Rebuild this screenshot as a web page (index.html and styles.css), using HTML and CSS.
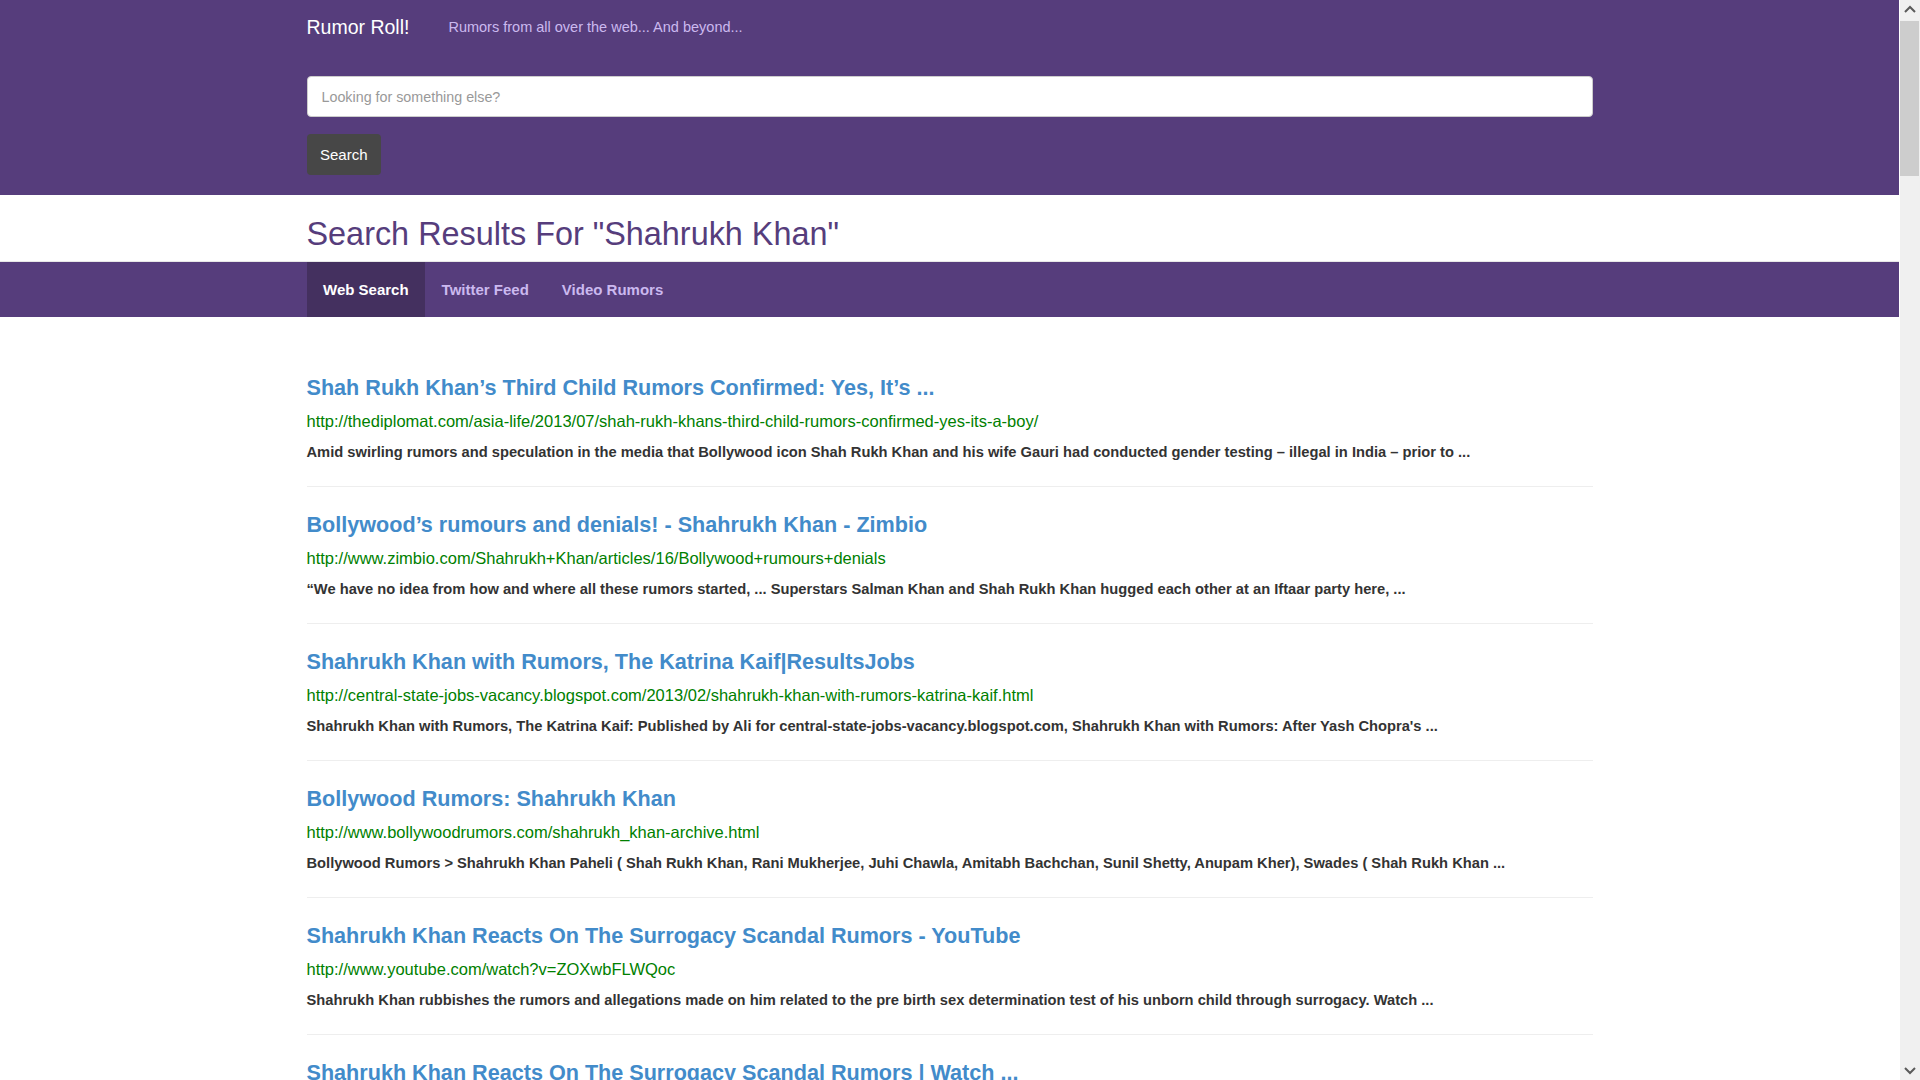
FILE: index.html
```html
<!DOCTYPE html>
<html lang="en">
<head>
<meta charset="utf-8">
<title>Rumor Roll! - Search Results</title>
<link rel="stylesheet" href="styles.css">
</head>
<body>
<header class="masthead">
  <div class="container">
    <div class="brand-row">
      <a class="brand" href="#">Rumor Roll!</a>
      <span class="tagline">Rumors from all over the web... And beyond...</span>
    </div>
    <form class="search-form">
      <input class="search-input" type="text" placeholder="Looking for something else?">
      <button class="search-btn" type="button">Search</button>
    </form>
  </div>
</header>

<div class="container">
  <h1 class="page-title">Search Results For "Shahrukh Khan"</h1>
</div>

<nav class="tabbar">
  <div class="container tabs">
    <a class="tab active" href="#">Web Search</a>
    <a class="tab" href="#">Twitter Feed</a>
    <a class="tab" href="#">Video Rumors</a>
  </div>
</nav>

<main class="container results">
  <div class="result">
    <a class="result-title" href="#">Shah Rukh Khan’s Third Child Rumors Confirmed: Yes, It’s ...</a>
    <div class="result-url">http://thediplomat.com/asia-life/2013/07/shah-rukh-khans-third-child-rumors-confirmed-yes-its-a-boy/</div>
    <p class="result-snippet">Amid swirling rumors and speculation in the media that Bollywood icon Shah Rukh Khan and his wife Gauri had conducted gender testing – illegal in India – prior to ...</p>
  </div>
  <div class="result">
    <a class="result-title" href="#">Bollywood’s rumours and denials! - Shahrukh Khan - Zimbio</a>
    <div class="result-url">http://www.zimbio.com/Shahrukh+Khan/articles/16/Bollywood+rumours+denials</div>
    <p class="result-snippet">“We have no idea from how and where all these rumors started, ... Superstars Salman Khan and Shah Rukh Khan hugged each other at an Iftaar party here, ...</p>
  </div>
  <div class="result">
    <a class="result-title" href="#">Shahrukh Khan with Rumors, The Katrina Kaif|ResultsJobs</a>
    <div class="result-url">http://central-state-jobs-vacancy.blogspot.com/2013/02/shahrukh-khan-with-rumors-katrina-kaif.html</div>
    <p class="result-snippet">Shahrukh Khan with Rumors, The Katrina Kaif: Published by Ali for central-state-jobs-vacancy.blogspot.com, Shahrukh Khan with Rumors: After Yash Chopra's ...</p>
  </div>
  <div class="result">
    <a class="result-title" href="#">Bollywood Rumors: Shahrukh Khan</a>
    <div class="result-url">http://www.bollywoodrumors.com/shahrukh_khan-archive.html</div>
    <p class="result-snippet">Bollywood Rumors &gt; Shahrukh Khan Paheli ( Shah Rukh Khan, Rani Mukherjee, Juhi Chawla, Amitabh Bachchan, Sunil Shetty, Anupam Kher), Swades ( Shah Rukh Khan ...</p>
  </div>
  <div class="result">
    <a class="result-title" href="#">Shahrukh Khan Reacts On The Surrogacy Scandal Rumors - YouTube</a>
    <div class="result-url">http://www.youtube.com/watch?v=ZOXwbFLWQoc</div>
    <p class="result-snippet">Shahrukh Khan rubbishes the rumors and allegations made on him related to the pre birth sex determination test of his unborn child through surrogacy. Watch ...</p>
  </div>
  <div class="result">
    <a class="result-title" href="#">Shahrukh Khan Reacts On The Surrogacy Scandal Rumors | Watch ...</a>
    <div class="result-url">http://www.youtube.com/watch?v=ZOXwbFLWQoc</div>
    <p class="result-snippet">Shahrukh Khan rubbishes the rumors and allegations made on him related to the pre birth sex determination test of his unborn child through surrogacy. Watch ...</p>
  </div>
</main>

<div class="fake-scrollbar" aria-hidden="true">
  <svg class="sb-arrow sb-up" width="20" height="20" viewBox="0 0 20 20"><path d="M5 12 L10 7 L15 12" fill="none" stroke="#5a5a5a" stroke-width="2"/></svg>
  <div class="sb-thumb"></div>
  <svg class="sb-arrow sb-down" width="20" height="20" viewBox="0 0 20 20"><path d="M5 8 L10 13 L15 8" fill="none" stroke="#5a5a5a" stroke-width="2"/></svg>
</div>
</body>
</html>
```
FILE: styles.css
```css
* { box-sizing: border-box; }

html, body {
  margin: 0;
  padding: 0;
}

body {
  margin-right: 21px;
  font-family: "Liberation Sans", Arial, Helvetica, sans-serif;
  color: #333;
  background: #fff;
}

.container {
  width: 1286px;
  margin: 0 auto;
}

/* Header */
.masthead {
  background: #563d7c;
  padding-bottom: 20px;
}

.brand-row {
  height: 54px;
  display: flex;
  align-items: center;
}

.brand {
  color: #fff;
  font-size: 19.5px;
  text-decoration: none;
  line-height: 20px;
}

.tagline {
  margin-left: 39px;
  color: #cbb9ef;
  font-size: 14.5px;
  line-height: 20px;
}

.search-form {
  display: flex;
  flex-direction: column;
  align-items: flex-start;
  padding-top: 22px;
  gap: 17px;
}

.search-input {
  width: 100%;
  height: 41px;
  border: 1px solid #ccc;
  border-radius: 4px;
  padding: 0 14px;
  font-family: inherit;
  font-size: 14.3px;
  color: #555;
  background: #fff;
  outline: none;
}

.search-input::placeholder {
  color: #999;
}

.search-btn {
  height: 41px;
  padding: 0 13.5px;
  border: 0;
  border-radius: 4px;
  background: #474747;
  color: #fff;
  font-family: inherit;
  font-size: 15px;
}

/* Heading */
.page-title {
  margin: 22px 0 9px;
  font-size: 32.4px;
  line-height: 35px;
  font-weight: 400;
  color: #563d7c;
}

/* Tabs */
.tabbar {
  background: #563d7c;
  border-top: 1px solid #e7e7e7;
}

.tabs {
  display: flex;
  height: 55px;
}

.tab {
  display: flex;
  align-items: center;
  padding: 0 16.5px;
  font-size: 15px;
  font-weight: 700;
  color: #cbb9ef;
  text-decoration: none;
}

.tab.active {
  background: #44305f;
  color: #fff;
}

/* Results */
.results {
  padding-top: 33px;
}

.result {
  padding: 25px 0 24px;
  border-bottom: 1px solid #eee;
}

.result-title {
  display: block;
  font-size: 21.6px;
  line-height: 26px;
  font-weight: 700;
  color: #428bca;
  text-decoration: none;
}

.result-url {
  margin-top: 10px;
  font-size: 16.5px;
  line-height: 20px;
  color: #008000;
}

.result-snippet {
  margin: 11px 0 0;
  font-size: 14.7px;
  line-height: 20px;
  font-weight: 700;
  color: #333;
}

/* Imitation of the browser scrollbar seen in the screenshot */
.fake-scrollbar {
  position: fixed;
  top: 0;
  right: 0;
  width: 20px;
  height: 100vh;
  background: #f0f0f0;
}

.sb-arrow {
  position: absolute;
  left: 0;
  display: block;
}

.sb-up { top: 0; }
.sb-down { bottom: 0; }

.sb-thumb {
  position: absolute;
  top: 21px;
  left: 0;
  width: 19px;
  height: 155px;
  background: #cdcdcd;
}
```
